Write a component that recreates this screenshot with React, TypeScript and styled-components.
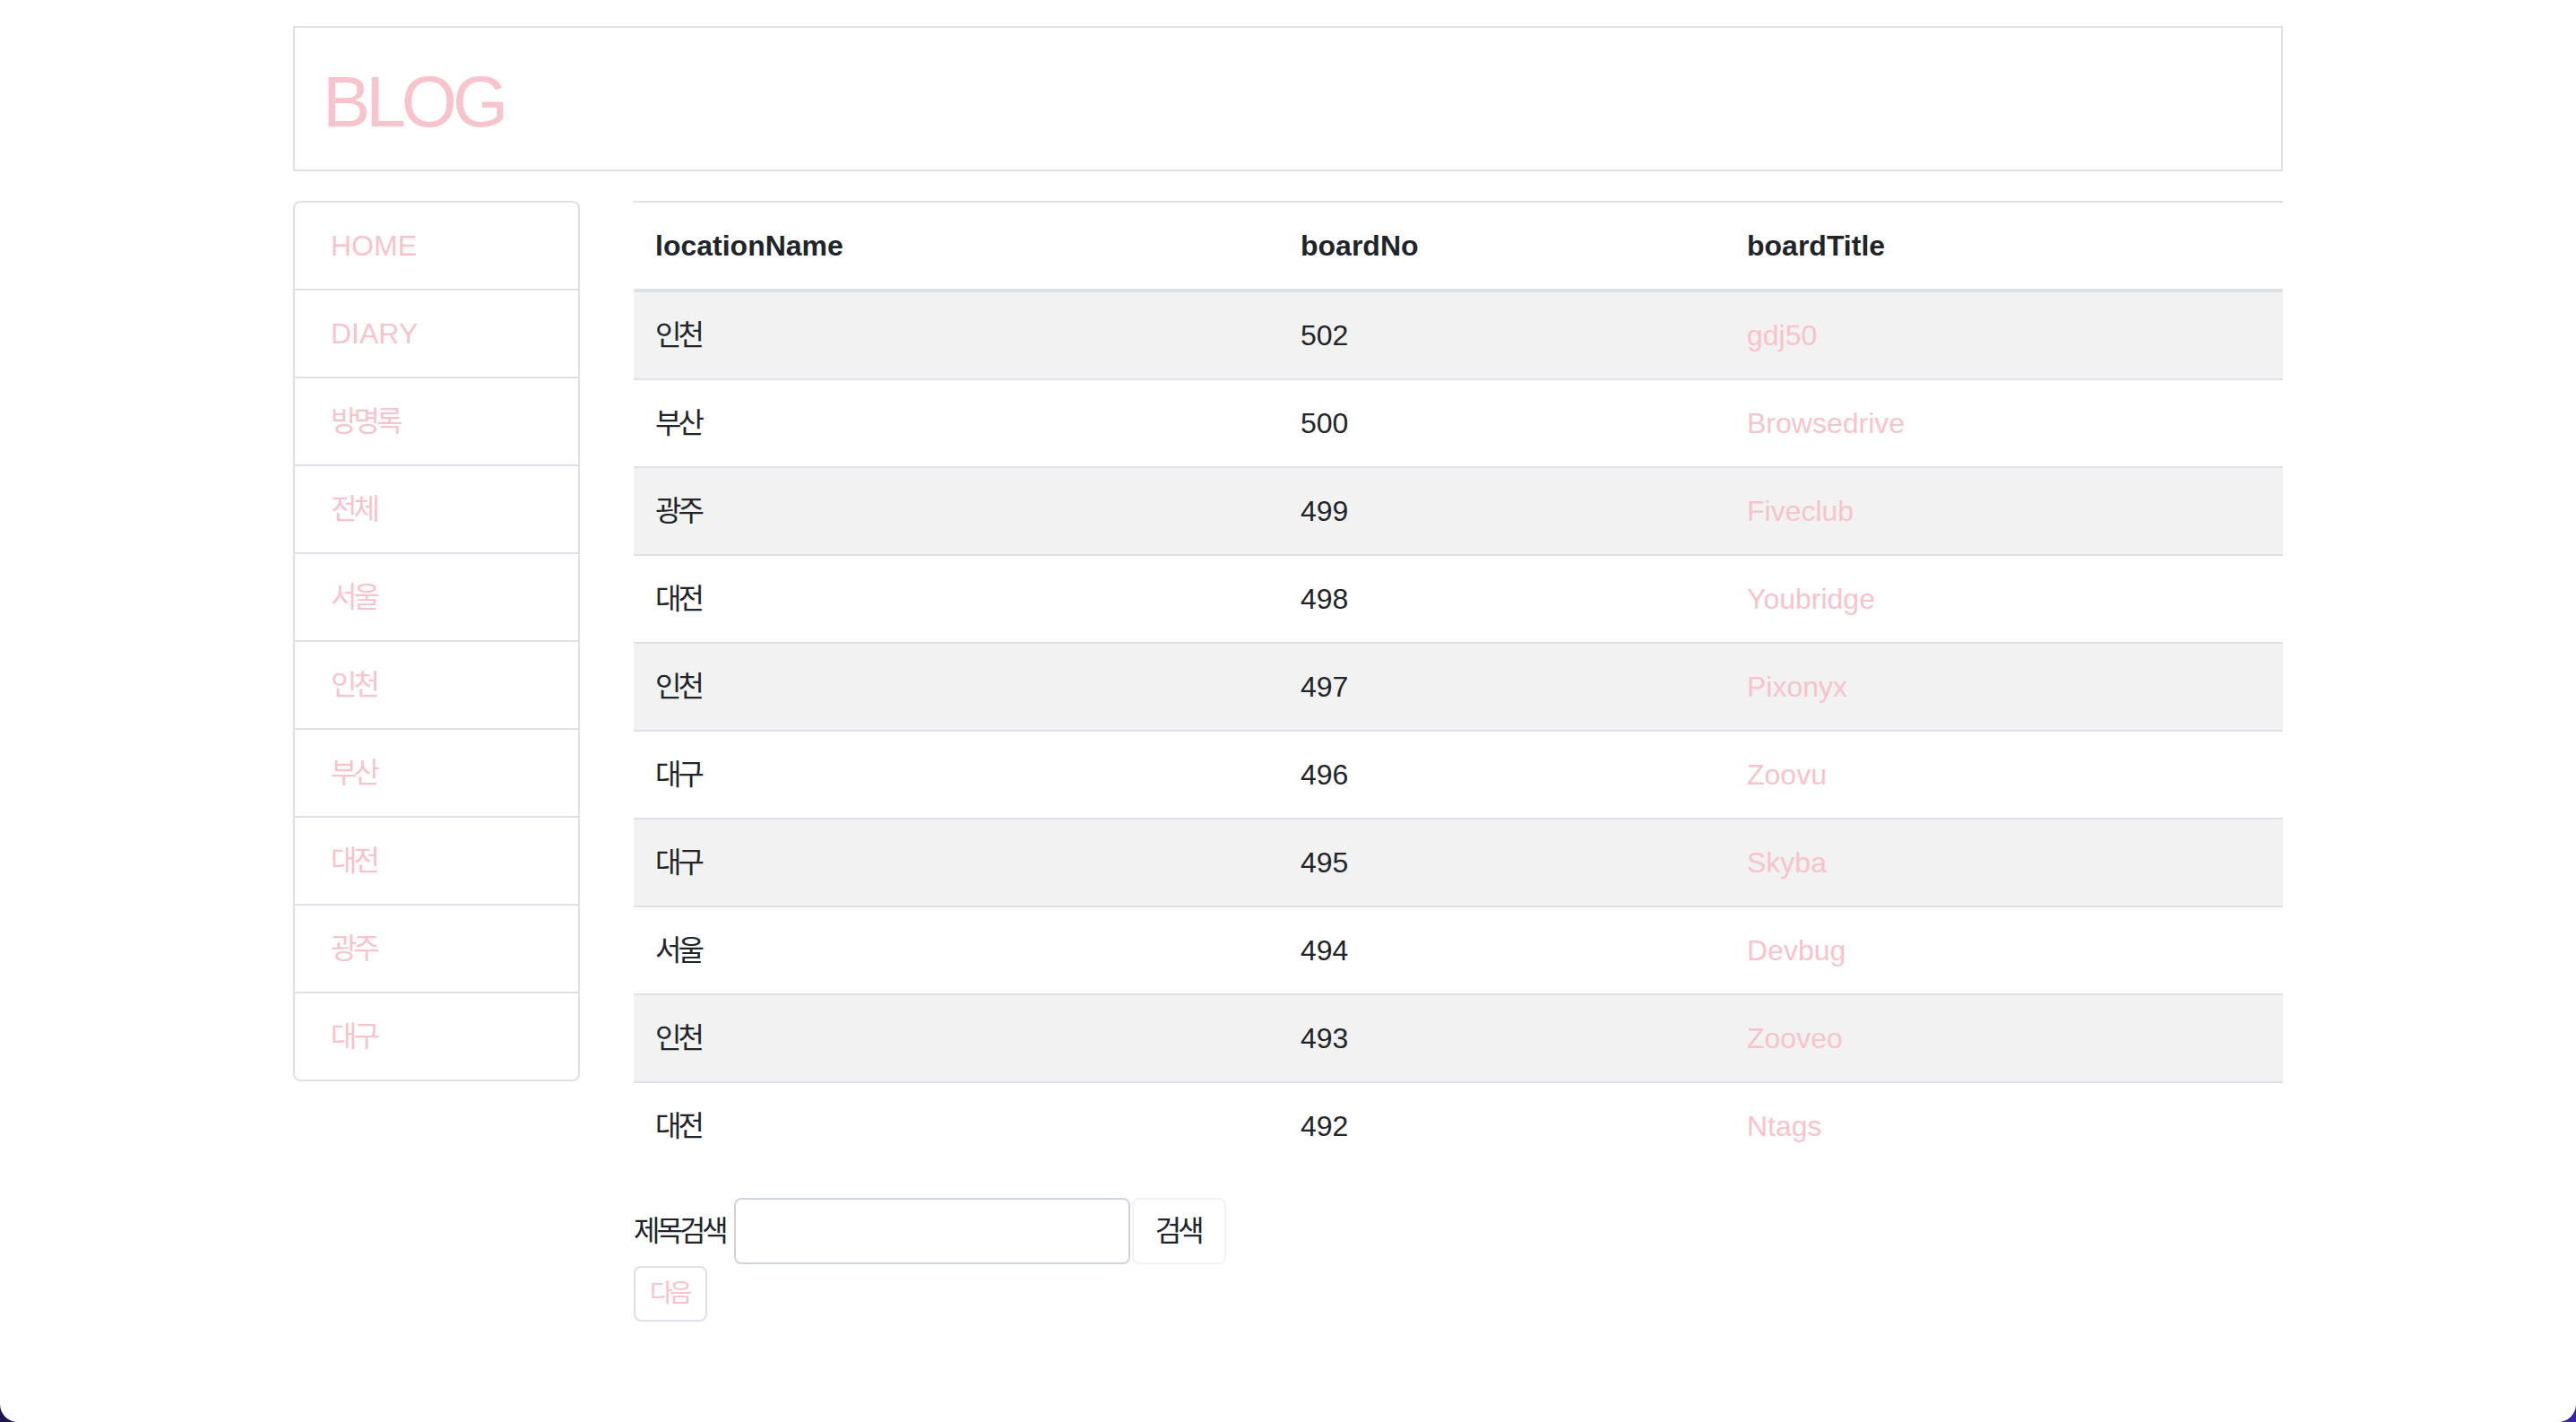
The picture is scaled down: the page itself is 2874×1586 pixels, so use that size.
import styled, { createGlobalStyle } from "styled-components";

const GlobalStyle = createGlobalStyle`
  html {
    background: linear-gradient(90deg, #1e1650 0%, #2c1c8a 50%, #3a22a6 100%);
  }
  body {
    margin: 0;
    font-family: "Liberation Sans", Arial, "Noto Sans CJK KR", sans-serif;
    font-size: 32px;
    line-height: 48px;
    color: #212529;
  }
  * {
    box-sizing: border-box;
  }
`;

const PINK = "#f7c3cc";
const LINE = "#dee2e6";

const Page = styled.div`
  min-height: 100vh;
  background: #fff;
  border-radius: 0 0 20px 20px;
`;

const Container = styled.div`
  width: 2220px;
  margin: 0 auto;
  padding-top: 29px;
`;

const Header = styled.header`
  border: 2px solid ${LINE};
  padding: 35px 32px 27px 31px;
`;

const Title = styled.h1`
  margin: 0;
  font-size: 80px;
  line-height: 96px;
  font-weight: 400;
  letter-spacing: -5px;
  color: ${PINK};
`;

const Main = styled.div`
  display: flex;
  gap: 60px;
  margin-top: 33px;
  align-items: flex-start;
`;

const Sidebar = styled.nav`
  width: 320px;
  flex-shrink: 0;
  border: 2px solid ${LINE};
  border-radius: 8px;
  overflow: hidden;
`;

const NavItem = styled.a<{ $ko?: boolean }>`
  display: block;
  padding: 24px 40px;
  line-height: 48px;
  color: ${PINK};
  text-decoration: none;
  letter-spacing: ${(p) => (p.$ko ? "-4px" : "normal")};
  &:not(:last-child) {
    border-bottom: 2px solid ${LINE};
  }
`;

const Content = styled.section`
  flex: 1;
`;

const Table = styled.table`
  width: 100%;
  border-collapse: collapse;
  margin-bottom: 32px;

  tbody tr:nth-of-type(odd) {
    background: #f2f2f2;
  }
`;

const Th = styled.th<{ $w?: number }>`
  width: ${(p) => (p.$w ? `${p.$w}px` : "auto")};
  padding: 24px;
  text-align: left;
  font-weight: 700;
  border-top: 2px solid ${LINE};
  border-bottom: 4px solid ${LINE};
`;

const Td = styled.td<{ $ko?: boolean }>`
  padding: 24px;
  border-top: 2px solid ${LINE};
  letter-spacing: ${(p) => (p.$ko ? "-4px" : "normal")};
`;

const TitleLink = styled.a`
  color: ${PINK};
  text-decoration: none;
`;

const SearchForm = styled.form`
  display: flex;
  align-items: center;
`;

const Label = styled.label`
  letter-spacing: -4px;
`;

const Input = styled.input`
  width: 442px;
  height: 74px;
  margin-left: 10px;
  border: 2px solid #ced4da;
  border-radius: 8px;
  font: inherit;
  padding: 0 24px;
`;

const SearchButton = styled.button`
  height: 74px;
  margin-left: 2px;
  padding: 0 26px 0 24px;
  border: 2px solid #f1f3f5;
  border-radius: 8px;
  background: #fff;
  color: #212529;
  font: inherit;
  letter-spacing: -4px;
`;

const NextButton = styled.button`
  margin-top: 2px;
  padding: 8px 18px 8px 16px;
  border: 2px solid ${LINE};
  border-radius: 8px;
  background: #fff;
  color: ${PINK};
  font-family: inherit;
  font-size: 28px;
  line-height: 42px;
  letter-spacing: -4px;
`;

const isKo = (s: string) => /[가-힣]/.test(s);

const menus = ["HOME", "DIARY", "방명록", "전체", "서울", "인천", "부산", "대전", "광주", "대구"];

const boards = [
  { locationName: "인천", boardNo: 502, boardTitle: "gdj50" },
  { locationName: "부산", boardNo: 500, boardTitle: "Browsedrive" },
  { locationName: "광주", boardNo: 499, boardTitle: "Fiveclub" },
  { locationName: "대전", boardNo: 498, boardTitle: "Youbridge" },
  { locationName: "인천", boardNo: 497, boardTitle: "Pixonyx" },
  { locationName: "대구", boardNo: 496, boardTitle: "Zoovu" },
  { locationName: "대구", boardNo: 495, boardTitle: "Skyba" },
  { locationName: "서울", boardNo: 494, boardTitle: "Devbug" },
  { locationName: "인천", boardNo: 493, boardTitle: "Zooveo" },
  { locationName: "대전", boardNo: 492, boardTitle: "Ntags" },
];

const App = () => {
  return (
    <>
      <GlobalStyle />
      <Page>
        <Container>
          <Header>
            <Title>BLOG</Title>
          </Header>
          <Main>
            <Sidebar>
              {menus.map((m) => (
                <NavItem key={m} href="#" $ko={isKo(m)}>
                  {m}
                </NavItem>
              ))}
            </Sidebar>
            <Content>
              <Table>
                <thead>
                  <tr>
                    <Th $w={720}>locationName</Th>
                    <Th $w={498}>boardNo</Th>
                    <Th>boardTitle</Th>
                  </tr>
                </thead>
                <tbody>
                  {boards.map((b) => (
                    <tr key={b.boardNo}>
                      <Td $ko>{b.locationName}</Td>
                      <Td>{b.boardNo}</Td>
                      <Td>
                        <TitleLink href="#">{b.boardTitle}</TitleLink>
                      </Td>
                    </tr>
                  ))}
                </tbody>
              </Table>
              <SearchForm onSubmit={(e) => e.preventDefault()}>
                <Label>제목검색</Label>
                <Input type="text" />
                <SearchButton type="submit">검색</SearchButton>
              </SearchForm>
              <NextButton type="button">다음</NextButton>
            </Content>
          </Main>
        </Container>
      </Page>
    </>
  );
};

export default App;
